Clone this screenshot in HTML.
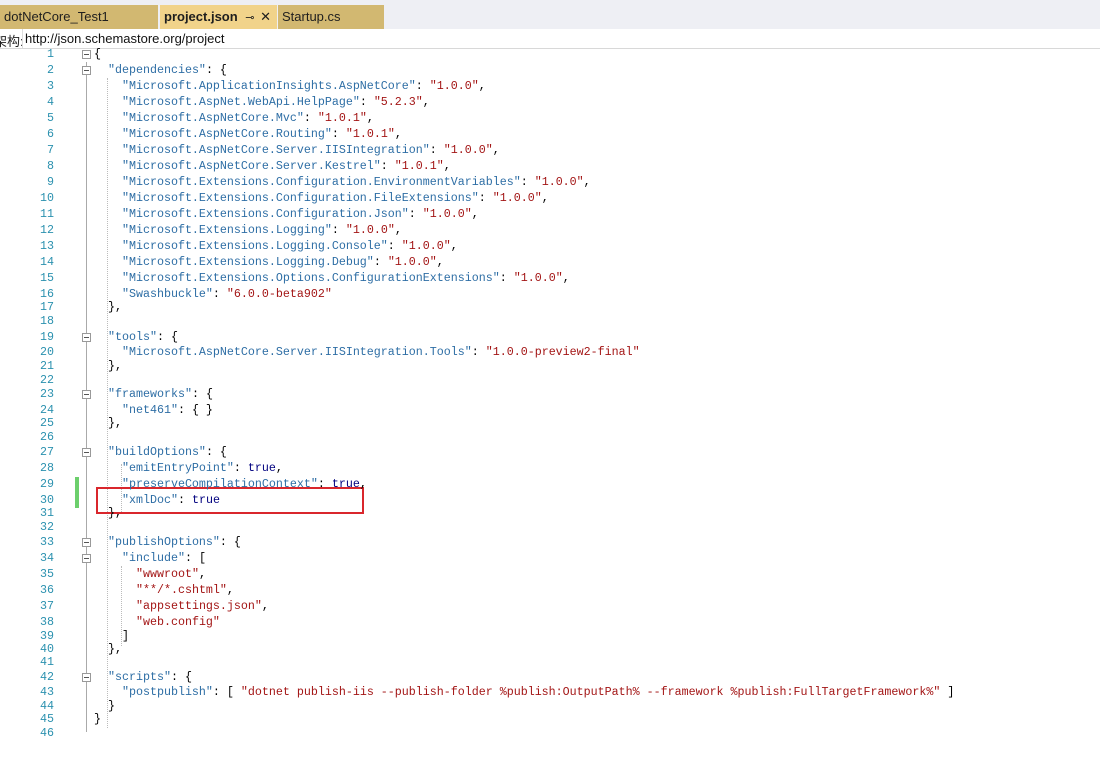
<!DOCTYPE html>
<html><head><meta charset="utf-8"><style>
body{margin:0;width:1100px;height:775px;background:#fff;position:relative;overflow:hidden;font-family:"Liberation Sans","Noto Sans CJK SC",sans-serif}
.top{position:absolute;left:0;top:0;width:1100px;height:29px;background:#eeeff4}
.tab{position:absolute;top:5px;height:24px;font-size:13px;line-height:24px;color:#1e1e1e;padding-left:4px;box-sizing:border-box}
.bar{position:absolute;left:0;top:29px;width:1100px;height:19px;background:#fff;border-bottom:1px solid #d8d8d8}
.l{position:absolute;left:0;height:16px;line-height:16px;font-family:"Liberation Mono",monospace;font-size:11.67px;white-space:pre;width:1100px}
.n{position:absolute;right:1046px;color:#2b91af}
.c{position:absolute;left:94px;color:#000}
.k{color:#2e6ea5}.s{color:#a31515}.t{color:#00007f}
.fb{position:absolute;left:82px;width:7px;height:7px;border:1px solid #999;background:#fff}
.fb:after{content:"";position:absolute;left:1px;top:3px;width:5px;height:1px;background:#555}
.vl{position:absolute;left:86px;width:1px;background:#aaa}
.g{position:absolute;width:0;border-left:1px dotted #bbb}
</style></head><body>
<div class="top"></div>
<div class="tab" style="left:0;width:158px;background:#d2b871">dotNetCore_Test1</div>
<div class="tab" style="left:160px;width:117px;background:#f1d38a;font-weight:bold">project.json <span style="font-weight:normal;font-size:11px;margin-left:4px">⊸</span> <span style="font-weight:normal;margin-left:2px">✕</span></div>
<div class="tab" style="left:278px;width:106px;background:#d2b871">Startup.cs</div>
<div class="bar"></div>
<div style="position:absolute;left:-6px;top:31px;font-size:13px;color:#222">架构:</div>
<div style="position:absolute;left:22px;top:29px;height:19px;width:1078px;border-left:1px solid #ddd;font-size:13px;line-height:20px;padding-left:2px;color:#111">http://json.schemastore.org/project</div>

<div class="vl" style="top:62px;height:670px"></div>
<div class="g" style="left:107px;top:78px;height:650px"></div>
<div class="g" style="left:121px;top:464px;height:48px"></div>
<div class="g" style="left:121px;top:566px;height:80px"></div>
<div style="position:absolute;left:75px;top:477px;width:4px;height:31px;background:#6ccf6c"></div>
<div style="position:absolute;left:96px;top:487px;width:268px;height:27px;border:2px solid #d9262c;box-sizing:border-box"></div>

<div class="l" style="top:46px"><span class="n">1</span><span class="c">{</span></div>
<div class="l" style="top:62px"><span class="n">2</span><span class="c">  <span class="k">"dependencies"</span>: {</span></div>
<div class="l" style="top:78px"><span class="n">3</span><span class="c">    <span class="k">"Microsoft.ApplicationInsights.AspNetCore"</span>: <span class="s">"1.0.0"</span>,</span></div>
<div class="l" style="top:94px"><span class="n">4</span><span class="c">    <span class="k">"Microsoft.AspNet.WebApi.HelpPage"</span>: <span class="s">"5.2.3"</span>,</span></div>
<div class="l" style="top:110px"><span class="n">5</span><span class="c">    <span class="k">"Microsoft.AspNetCore.Mvc"</span>: <span class="s">"1.0.1"</span>,</span></div>
<div class="l" style="top:126px"><span class="n">6</span><span class="c">    <span class="k">"Microsoft.AspNetCore.Routing"</span>: <span class="s">"1.0.1"</span>,</span></div>
<div class="l" style="top:142px"><span class="n">7</span><span class="c">    <span class="k">"Microsoft.AspNetCore.Server.IISIntegration"</span>: <span class="s">"1.0.0"</span>,</span></div>
<div class="l" style="top:158px"><span class="n">8</span><span class="c">    <span class="k">"Microsoft.AspNetCore.Server.Kestrel"</span>: <span class="s">"1.0.1"</span>,</span></div>
<div class="l" style="top:174px"><span class="n">9</span><span class="c">    <span class="k">"Microsoft.Extensions.Configuration.EnvironmentVariables"</span>: <span class="s">"1.0.0"</span>,</span></div>
<div class="l" style="top:190px"><span class="n">10</span><span class="c">    <span class="k">"Microsoft.Extensions.Configuration.FileExtensions"</span>: <span class="s">"1.0.0"</span>,</span></div>
<div class="l" style="top:206px"><span class="n">11</span><span class="c">    <span class="k">"Microsoft.Extensions.Configuration.Json"</span>: <span class="s">"1.0.0"</span>,</span></div>
<div class="l" style="top:222px"><span class="n">12</span><span class="c">    <span class="k">"Microsoft.Extensions.Logging"</span>: <span class="s">"1.0.0"</span>,</span></div>
<div class="l" style="top:238px"><span class="n">13</span><span class="c">    <span class="k">"Microsoft.Extensions.Logging.Console"</span>: <span class="s">"1.0.0"</span>,</span></div>
<div class="l" style="top:254px"><span class="n">14</span><span class="c">    <span class="k">"Microsoft.Extensions.Logging.Debug"</span>: <span class="s">"1.0.0"</span>,</span></div>
<div class="l" style="top:270px"><span class="n">15</span><span class="c">    <span class="k">"Microsoft.Extensions.Options.ConfigurationExtensions"</span>: <span class="s">"1.0.0"</span>,</span></div>
<div class="l" style="top:286px"><span class="n">16</span><span class="c">    <span class="k">"Swashbuckle"</span>: <span class="s">"6.0.0-beta902"</span></span></div>
<div class="l" style="top:299px"><span class="n">17</span><span class="c">  },</span></div>
<div class="l" style="top:313px"><span class="n">18</span><span class="c"></span></div>
<div class="l" style="top:329px"><span class="n">19</span><span class="c">  <span class="k">"tools"</span>: {</span></div>
<div class="l" style="top:344px"><span class="n">20</span><span class="c">    <span class="k">"Microsoft.AspNetCore.Server.IISIntegration.Tools"</span>: <span class="s">"1.0.0-preview2-final"</span></span></div>
<div class="l" style="top:358px"><span class="n">21</span><span class="c">  },</span></div>
<div class="l" style="top:372px"><span class="n">22</span><span class="c"></span></div>
<div class="l" style="top:386px"><span class="n">23</span><span class="c">  <span class="k">"frameworks"</span>: {</span></div>
<div class="l" style="top:402px"><span class="n">24</span><span class="c">    <span class="k">"net461"</span>: { }</span></div>
<div class="l" style="top:415px"><span class="n">25</span><span class="c">  },</span></div>
<div class="l" style="top:429px"><span class="n">26</span><span class="c"></span></div>
<div class="l" style="top:444px"><span class="n">27</span><span class="c">  <span class="k">"buildOptions"</span>: {</span></div>
<div class="l" style="top:460px"><span class="n">28</span><span class="c">    <span class="k">"emitEntryPoint"</span>: <span class="t">true</span>,</span></div>
<div class="l" style="top:476px"><span class="n">29</span><span class="c">    <span class="k">"preserveCompilationContext"</span>: <span class="t">true</span>,</span></div>
<div class="l" style="top:492px"><span class="n">30</span><span class="c">    <span class="k">"xmlDoc"</span>: <span class="t">true</span></span></div>
<div class="l" style="top:505px"><span class="n">31</span><span class="c">  },</span></div>
<div class="l" style="top:519px"><span class="n">32</span><span class="c"></span></div>
<div class="l" style="top:534px"><span class="n">33</span><span class="c">  <span class="k">"publishOptions"</span>: {</span></div>
<div class="l" style="top:550px"><span class="n">34</span><span class="c">    <span class="k">"include"</span>: [</span></div>
<div class="l" style="top:566px"><span class="n">35</span><span class="c">      <span class="s">"wwwroot"</span>,</span></div>
<div class="l" style="top:582px"><span class="n">36</span><span class="c">      <span class="s">"**/*.cshtml"</span>,</span></div>
<div class="l" style="top:598px"><span class="n">37</span><span class="c">      <span class="s">"appsettings.json"</span>,</span></div>
<div class="l" style="top:614px"><span class="n">38</span><span class="c">      <span class="s">"web.config"</span></span></div>
<div class="l" style="top:628px"><span class="n">39</span><span class="c">    ]</span></div>
<div class="l" style="top:641px"><span class="n">40</span><span class="c">  },</span></div>
<div class="l" style="top:654px"><span class="n">41</span><span class="c"></span></div>
<div class="l" style="top:669px"><span class="n">42</span><span class="c">  <span class="k">"scripts"</span>: {</span></div>
<div class="l" style="top:684px"><span class="n">43</span><span class="c">    <span class="k">"postpublish"</span>: [ <span class="s">"dotnet publish-iis --publish-folder %publish:OutputPath% --framework %publish:FullTargetFramework%"</span> ]</span></div>
<div class="l" style="top:698px"><span class="n">44</span><span class="c">  }</span></div>
<div class="l" style="top:711px"><span class="n">45</span><span class="c">}</span></div>
<div class="l" style="top:725px"><span class="n">46</span><span class="c"></span></div>

<div class="fb" style="top:50px"></div>
<div class="fb" style="top:66px"></div>
<div class="fb" style="top:333px"></div>
<div class="fb" style="top:390px"></div>
<div class="fb" style="top:448px"></div>
<div class="fb" style="top:538px"></div>
<div class="fb" style="top:554px"></div>
<div class="fb" style="top:673px"></div>
</body></html>
